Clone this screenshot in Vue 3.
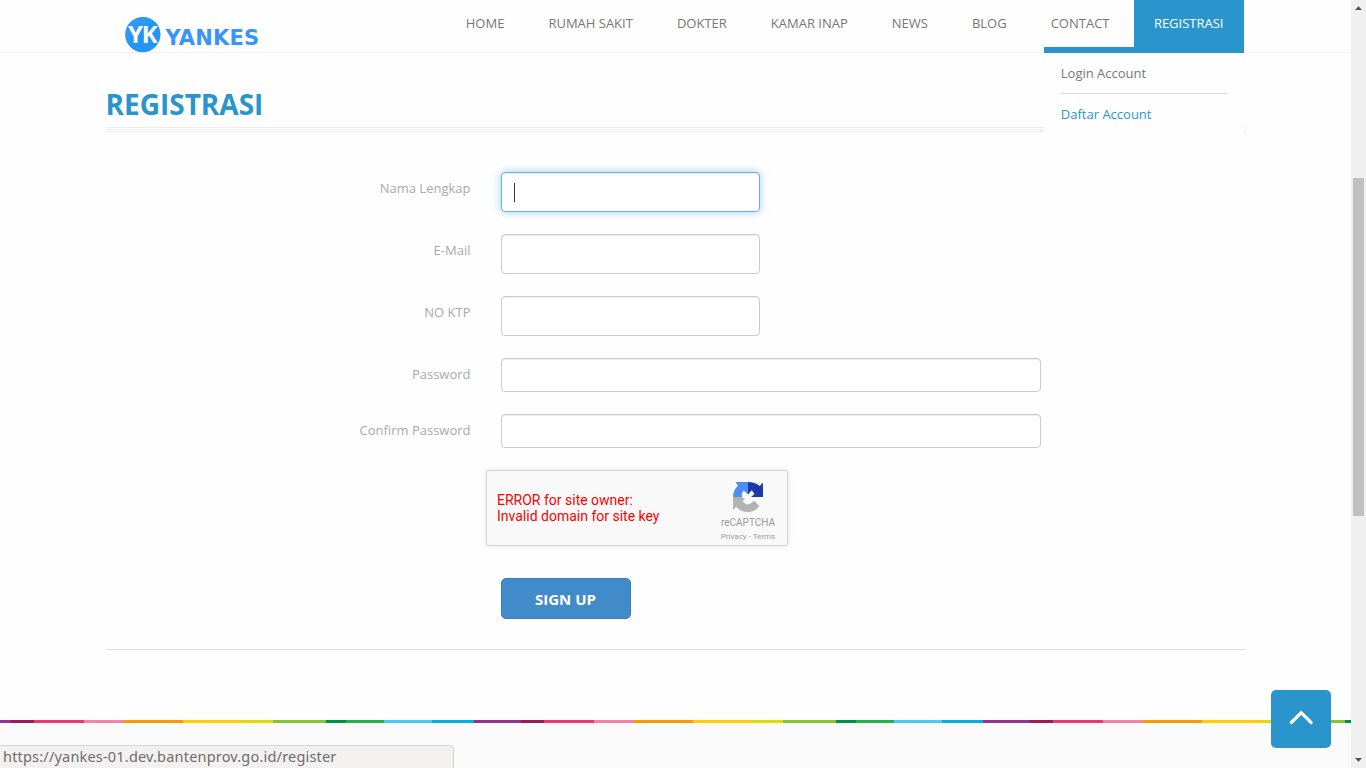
<script setup>
const links = ['HOME', 'RUMAH SAKIT', 'DOKTER', 'KAMAR INAP', 'NEWS', 'BLOG', 'CONTACT']
const fields = [
  { label: 'Nama Lengkap', size: 'short', focused: true },
  { label: 'E-Mail', size: 'short' },
  { label: 'NO KTP', size: 'short' },
  { label: 'Password', size: 'long' },
  { label: 'Confirm Password', size: 'long' },
]
</script>

<template>
  <div class="screen">
    <div class="page">
      <header class="header">
        <div class="container bar">
          <a class="logo">
            <svg width="36" height="36" viewBox="0 0 36 36">
              <defs>
                <linearGradient id="disc" x1="0" y1="0" x2="1" y2="1">
                  <stop offset="0" stop-color="#3f9bf8" />
                  <stop offset="0.5" stop-color="#2196f3" />
                </linearGradient>
              </defs>
              <circle cx="17.800" cy="17.600" r="17.700" fill="url(#disc)" />
              <text class="monogram" x="3" y="26">Y</text>
              <text class="monogram" x="16.800" y="26">K</text>
            </svg>
            <span class="brand">YANKES</span>
          </a>
          <nav class="nav">
            <a v-for="l in links" :key="l" class="link">{{ l }}</a>
            <div class="link active">
              REGISTRASI
              <div class="dropdown">
                <a class="item">Login Account</a>
                <a class="item current">Daftar Account</a>
              </div>
            </div>
          </nav>
        </div>
      </header>

      <main class="container content">
        <h1 class="title">REGISTRASI</h1>
        <div class="rules"></div>
        <form class="form" @submit.prevent>
          <div v-for="f in fields" :key="f.label" class="row" :class="f.size">
            <label class="label">{{ f.label }}</label>
            <div class="input" :class="{ focused: f.focused }"><i v-if="f.focused" class="caret"></i></div>
          </div>
          <div class="captcha">
            <p class="error">ERROR for site owner:<br />Invalid domain for site key</p>
            <div class="badge">
              <svg class="mark" width="32" height="32" viewBox="0 0 64 64">
                <path fill="#1c3aa9" d="M32 2C41 2 50 5 55.500 10L62 3V32H38L45 26 39.500 18.500 32 27z" />
                <path fill="#4c8df6" d="M32 2V27L23.500 19 19.500 25 20 32H2C2 23 5.500 15 12 9.500L7 2z" />
                <path fill="#b3b3b3" d="M2 32H19L26 35 21 41 29 47C34 47 40 44 44 39L54.500 50C49 58 41 62 32 62 22 62 14 58 8.500 51.500L2 58z" />
              </svg>
              <span class="name">reCAPTCHA</span>
              <span class="terms">Privacy - Terms</span>
            </div>
          </div>
          <button class="submit">SIGN UP</button>
        </form>
        <hr class="end" />
      </main>

      <footer class="footer"></footer>
    </div>

    <aside class="scrollbar">
      <svg width="15" height="16" viewBox="0 0 15 16"><path d="M4 10L7.500 6.200 11 10z" fill="#505050" /></svg>
      <div class="track"><div class="thumb"></div></div>
      <svg width="15" height="16" viewBox="0 0 15 16"><path d="M4 6L7.500 9.800 11 6z" fill="#505050" /></svg>
    </aside>

    <a class="to-top">
      <svg width="60" height="58" viewBox="0 0 60 58"><path d="M20.300 32.500L30.200 22.700 40.100 32.500" fill="none" stroke="#fff" stroke-width="3.200" stroke-linecap="round" /></svg>
    </a>
    <div class="status">https://yankes-01.dev.bantenprov.go.id/register</div>
  </div>
</template>

<style>
body {
  margin: 0;
  overflow: hidden;
}
</style>

<style scoped>
* {
  box-sizing: border-box;
}
.screen {
  position: relative;
  display: flex;
  width: 1366px;
  height: 768px;
  overflow: hidden;
  background: #fefefe;
  font-family: 'Open Sans', sans-serif;
  font-size: 13px;
}
.page {
  display: flex;
  flex-direction: column;
  width: 1351px;
}
.container {
  width: 1140px;
  margin-left: 106px;
}
.header {
  height: 53px;
  border-bottom: 1px solid #f2f2f2;
}
.bar {
  display: flex;
  justify-content: space-between;
  height: 53px;
  padding: 0 2px 0 18.500px;
}
.logo {
  display: flex;
  align-items: flex-start;
  padding-top: 17px;
}
.logo svg {
  display: block;
}
.monogram {
  font: bold 24px 'Open Sans', sans-serif;
  fill: #fff;
}
.brand {
  margin: 8px 0 0 5px;
  font: bold 21px/26px 'DejaVu Sans', sans-serif;
  letter-spacing: 0.15px;
  color: #3794fb;
}
.nav {
  display: flex;
  gap: 4px;
}
.link {
  height: 53px;
  padding: 0 20px;
  line-height: 46px;
  color: #777;
  white-space: nowrap;
}
.link:not(.active) {
  position: relative;
  left: -0.600px;
}
.link.active {
  position: relative;
  padding: 0 20.500px 0 19.800px;
  background: #2a95cd;
  color: #fff;
}
.dropdown {
  position: absolute;
  z-index: 2;
  top: 47px;
  right: 0;
  width: 200px;
  height: 86px;
  padding: 0 17px;
  border-top: 6px solid #2a95cd;
  background: #fefefe;
}
.item {
  display: block;
  height: 41px;
  line-height: 41px;
  border-bottom: 1px solid #ddd;
  color: #777;
  text-indent: -0.200px;
}
.item.current {
  border: 0;
  color: #2a95cd;
}
.content {
  height: 667px;
}
.title {
  margin: 0;
  padding-top: 32px;
  font-size: 28px;
  line-height: 39px;
  font-weight: 700;
  text-indent: -0.500px;
  color: #2a95cd;
}
.rules {
  height: 5px;
  margin-top: 3px;
  background: linear-gradient(#ececec 0 1px, transparent 1px 2px) 0 0 / 100% 2px;
}
.form {
  padding-top: 40px;
}
.row {
  display: flex;
  gap: 30.500px;
  margin-bottom: 22px;
}
.label {
  width: 364.500px;
  height: 32px;
  line-height: 32px;
  text-align: right;
  color: #aaa;
}
.input {
  height: 40px;
  width: 259px;
  border: 1px solid #ccc;
  border-radius: 4px;
  background: #fff;
  box-shadow: inset 0 1px 1px rgba(0, 0, 0, 0.075);
}
.long .input {
  width: 540px;
  height: 34px;
}
.input.focused {
  padding: 10px 0 0 12px;
  border-color: #66afe9;
  box-shadow: inset 0 1px 1px rgba(0, 0, 0, 0.075), 0 0 8px rgba(102, 175, 233, 0.6);
}
.caret {
  display: block;
  width: 1px;
  height: 19px;
  background: #333;
}
.captcha {
  display: flex;
  justify-content: space-between;
  width: 302px;
  height: 76px;
  margin-left: 380px;
  padding: 0 10px;
  border: 1px solid #d3d3d3;
  border-radius: 3px;
  background: #f9f9f9;
  box-shadow: 0 0 4px 1px rgba(0, 0, 0, 0.08);
  font-family: Roboto, sans-serif;
}
.error {
  margin: 21px 0 0;
  font-size: 14px;
  line-height: 16px;
  color: #f00;
}
.badge {
  display: flex;
  flex-direction: column;
  align-items: center;
  width: 58px;
  padding-top: 10px;
  color: #9b9b9b;
}
.name {
  margin-top: 4px;
  font-size: 10px;
  line-height: 12px;
}
.terms {
  margin-top: 3px;
  font-size: 8px;
  line-height: 10px;
  white-space: nowrap;
}
.mark {
  display: block;
}
.submit {
  display: block;
  width: 130px;
  height: 41px;
  margin: 32px 0 0 395px;
  padding: 0 1px 0 0;
  border: 1px solid #357ebd;
  border-radius: 5px;
  background: #428bca;
  color: #fff;
  font: bold 15px 'Open Sans', sans-serif;
}
.end {
  margin: 30px 0 0;
  border: 0;
  border-top: 1px solid #ddd;
}
.footer {
  flex: 1;
  background:
    repeating-linear-gradient(
      90deg,
      #92348e 0 47px,
      #9c1a55 47px 70px,
      #f13474 70px 120px,
      #fc7eaa 120px 160px,
      #fd9800 160px 219px,
      #fecc00 219px 278px,
      #dbdd00 278px 309px,
      #88c336 309px 362px,
      #009247 362px 382px,
      #22b24b 382px 420.5px,
      #45cdf3 420.5px 468.5px,
      #00aee4 468.5px 509.6px
    ) -36px 0 / 1400px 3px no-repeat,
    #fafafa;
}
.scrollbar {
  display: flex;
  flex-direction: column;
  width: 15px;
  background: #f0f0f0;
}
.track {
  flex: 1;
  padding: 162px 2px 0;
}
.thumb {
  height: 338px;
  background: #c0c0c0;
}
.to-top {
  position: absolute;
  right: 35px;
  top: 690px;
  width: 60px;
  height: 58px;
  border-radius: 5px;
  background: #2a95cd;
}
.status {
  position: absolute;
  left: -1px;
  bottom: -1px;
  width: 455px;
  height: 24px;
  padding-left: 3px;
  border: 1px solid #d5d5d5;
  border-radius: 0 4px 0 0;
  background: #f2f1f0;
  color: #6c6c6c;
  font: 14.500px/20px 'Noto Sans', sans-serif;
  letter-spacing: 0.190px;
  white-space: nowrap;
}
</style>
